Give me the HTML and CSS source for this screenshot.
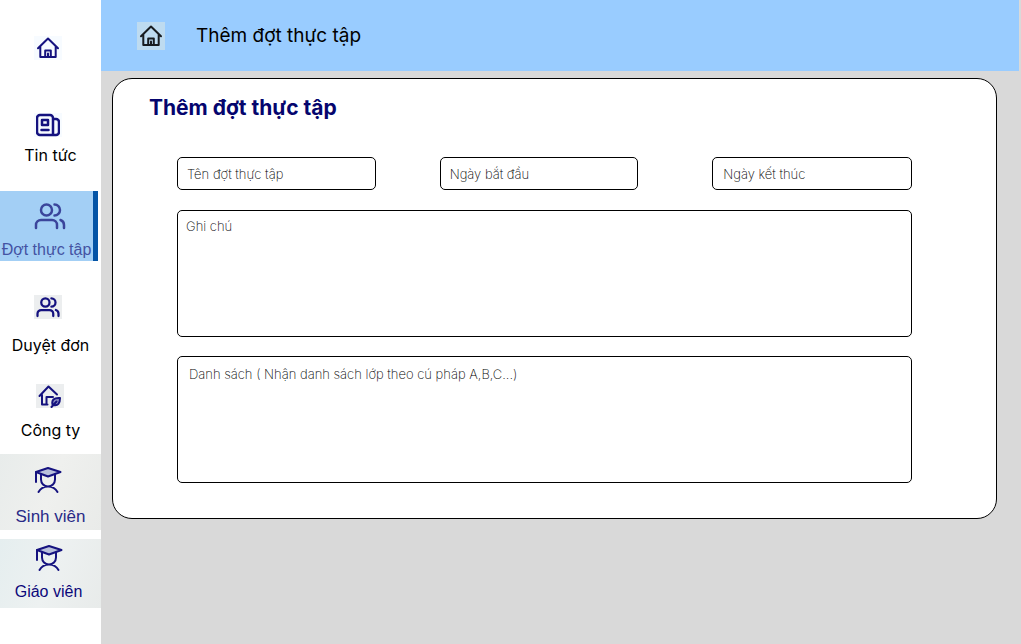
FILE: index.html
```html
<!DOCTYPE html>
<html lang="vi">
<head>
<meta charset="utf-8">
<meta name="viewport" content="width=device-width, initial-scale=1">
<title>Thêm đợt thực tập</title>
<link rel="stylesheet" href="styles.css">
</head>
<body>
<svg class="sprite" aria-hidden="true">
  <symbol id="home" viewBox="0 0 24 24"><path d="M2 12.2 12 2.5l10 9.7M4.3 10.5V21h15.4V10.5M9.2 21v-6.5h5.6V21M12 17.500V21"/></symbol>
  <symbol id="users" viewBox="0 0 32 28"><circle cx="12.5" cy="8" r="5.500"/><path d="M20.500 2.500a5.500 5.500 0 0 1 0 11M2 26v-3a5 5 0 0 1 5-5h11a5 5 0 0 1 5 5v3M26.500 18c2.500.8 3.500 2.500 3.500 5v3"/></symbol>
  <symbol id="grad" viewBox="0 0 28 28"><path class="cap" d="M2 6 14 2l12.500 4L14 10.500z"/><path d="M2 6v10M7 8.500V13.500a7 7 0 0 0 14 0V8.500M4.500 26c2-3.500 5.300-5.500 9.500-5.500s7.500 2 9.500 5.500"/></symbol>
</svg>
<div class="app">
  <nav class="sidebar" aria-label="Menu">
    <a class="item item-home" href="#" aria-label="Trang chủ"><span class="tile tile-pale"><svg class="icon"><use href="#home"/></svg></span></a>
    <a class="item item-news" href="#"><span class="tile tile-pale"><svg class="icon icon-news" viewBox="0 0 24 24"><path d="M17 22H4a3 3 0 0 1-3-3V5a3 3 0 0 1 3-3h10a3 3 0 0 1 3 3zM17 6h3a3 3 0 0 1 3 3v10a3 3 0 0 1-3 3h-3M6 7h6v5H6zM5.500 17h7"/></svg></span><span>Tin tức</span></a>
    <a class="item item-period" href="#" aria-current="page"><svg class="icon-users"><use href="#users"/></svg><span>Đợt thực tập</span></a>
    <a class="item item-review" href="#"><span class="tile tile-gray"><svg class="icon icon-bold"><use href="#users"/></svg></span><span>Duyệt đơn</span></a>
    <a class="item item-company" href="#"><span class="tile tile-gray"><svg class="icon" viewBox="0 0 24 24"><path d="M1.500 12 10.500 2.500l8.500 8M4 11v9.500h5.500M8.500 20v-7H15"/><path class="leaf" d="M14.500 20.500c-1-4 1-7 7.500-6.500 0 5.500-2 8-6.500 7M13.500 23l5-5.500"/></svg></span><span>Công ty</span></a>
    <a class="item item-student" href="#"><svg class="icon-grad"><use href="#grad"/></svg><span>Sinh viên</span></a>
    <a class="item item-teacher" href="#"><svg class="icon-grad"><use href="#grad"/></svg><span>Giáo viên</span></a>
  </nav>
  <div class="content">
    <header class="topbar">
      <a class="home-link" href="#" aria-label="Trang chủ"><svg class="icon"><use href="#home"/></svg></a>
      <span>Thêm đợt thực tập</span>
    </header>
    <main class="card">
      <h1 class="title">Thêm đợt thực tập</h1>
      <form class="form">
        <div class="row">
          <input class="field" type="text" placeholder="Tên đợt thực tập" aria-label="Tên đợt thực tập">
          <input class="field field-start" type="text" placeholder="Ngày bắt đầu" aria-label="Ngày bắt đầu">
          <input class="field field-end" type="text" placeholder="Ngày kết thúc" aria-label="Ngày kết thúc">
        </div>
        <textarea class="field area area-note" placeholder="Ghi chú" aria-label="Ghi chú"></textarea>
        <textarea class="field area area-list" placeholder="Danh sách ( Nhận danh sách lớp theo cú pháp A,B,C...)" aria-label="Danh sách"></textarea>
      </form>
    </main>
  </div>
</div>
</body>
</html>
```
FILE: styles.css
```css
* { box-sizing: border-box; }
body { margin: 0; font-family: Inter, sans-serif; background: #d9d9d9; }
.sprite { position: absolute; width: 0; height: 0; }
.app { display: flex; min-height: 100vh; }

svg { display: block; fill: none; stroke: currentColor; stroke-width: 2; stroke-linejoin: round; stroke-linecap: round; }
.icon { width: 24px; height: 24px; }
.icon-news { stroke-width: 2.5; }
.icon-bold { stroke-width: 3; }
.icon-users { width: 32px; height: 32px; stroke-width: 2.5; }
.icon-grad { width: 28px; height: 28px; }
.cap { fill: #b9c0dc; }
.leaf { fill: #8d90c4; }

.sidebar { flex: 0 0 101px; display: flex; flex-direction: column; padding-top: 36px; background: #fff; }
.item { display: flex; flex-direction: column; align-items: center; color: #000; font-size: 16px; line-height: 20px; text-decoration: none; white-space: nowrap; }
.item svg { color: #15127f; }
.tile { display: flex; align-items: center; justify-content: center; width: 28px; height: 24px; margin-right: 5px; }
.tile-pale { background: #f7fbff; }
.tile-gray { background: #eceeef; }
.item-news { margin-top: 53px; gap: 8px; }
.item-period { margin: 26px 3px 0 0; padding: 9px 0 1px; gap: 8px; border-right: 5px solid #0454a6; background: #a3cff5; color: #4453a3; font-family: "Liberation Sans", Arial, sans-serif; }
.item-period svg { color: #3b459b; margin-left: 6px; }
.item-review { margin-top: 34px; gap: 16px; }
.item-company { margin-top: 29px; gap: 12px; }
.item-company .tile { margin-right: 1px; }
.item-student, .item-teacher { font-family: "Liberation Sans", Arial, sans-serif; }
.item-student { margin-top: 14px; padding: 12px 0 3px; gap: 13px; color: #292a87; background: linear-gradient(110deg, #e8eceb, #eff0ee 50%, #e9ebe9); font-size: 17px; }
.item-teacher { margin-top: 9px; padding: 5px 4px 6px 0; gap: 10px; color: #0b087a; background: linear-gradient(110deg, #e5eeef, #edf1f1 50%, #e8ebea); }
.item-student svg { margin-right: 5px; }

.content { flex: 1; min-width: 0; }
.topbar { display: flex; align-items: center; gap: 31px; height: 71px; margin-right: 2px; padding-left: 36px; background: #99ccff; font-size: 19px; }
.home-link { display: flex; align-items: center; justify-content: center; width: 28px; height: 28px; background: #bedbf0; color: #181c20; }
.card { margin: 7px 24px 0 11px; padding: 15px 84px 35px 64px; border: 1px solid #000; border-radius: 20px; background: #fff; }
.title { margin: 0 0 35px -28px; color: #05056e; font-size: 21px; line-height: 28px; font-weight: 700; }
.form { display: flex; flex-direction: column; }
.row { display: flex; }
.field { flex: 1; min-width: 0; height: 33px; padding: 0 9px; border: 1px solid #000; border-radius: 5px; background: #fff; font-family: Inter, sans-serif; font-size: 13px; font-weight: 200; }
.field::placeholder { color: #000; opacity: 1; }
.field-start { margin-left: 64px; }
.field-end { margin-left: 74px; padding-left: 10px; }
.area { flex: none; width: 100%; height: 127px; line-height: 20px; resize: none; }
.area-note { margin-top: 20px; padding: 5px 8px; }
.area-list { margin-top: 19px; padding: 7px 11px; }
```
